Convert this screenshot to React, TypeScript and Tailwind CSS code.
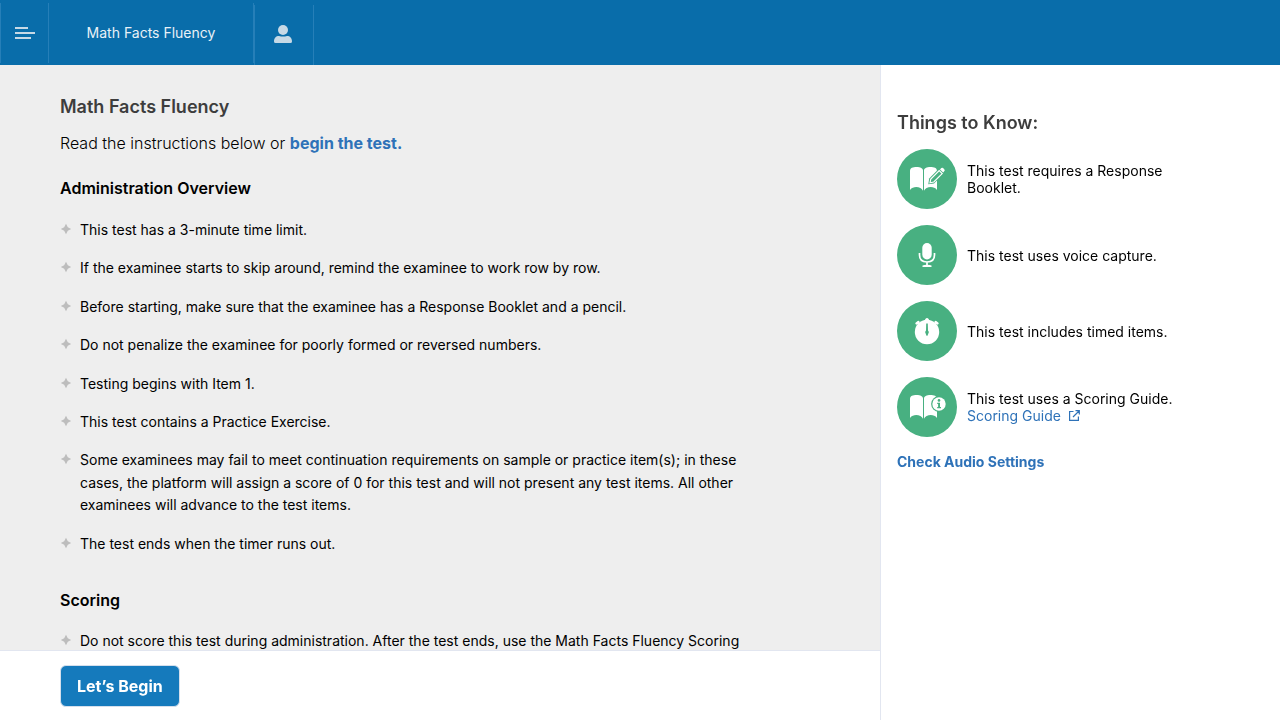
import type { ReactNode } from "react";

const overview = [
  "This test has a 3-minute time limit.",
  "If the examinee starts to skip around, remind the examinee to work row by row.",
  "Before starting, make sure that the examinee has a Response Booklet and a pencil.",
  "Do not penalize the examinee for poorly formed or reversed numbers.",
  "Testing begins with Item 1.",
  "This test contains a Practice Exercise.",
  "Some examinees may fail to meet continuation requirements on sample or practice item(s); in these cases, the platform will assign a score of 0 for this test and will not present any test items. All other examinees will advance to the test items.",
  "The test ends when the timer runs out.",
];

const scoring = [
  "Do not score this test during administration. After the test ends, use the Math Facts Fluency Scoring Guide.",
];

function BulletList({ items }: { items: string[] }) {
  return (
    <ul className="flex flex-col gap-4 text-sm leading-[1.6]">
      {items.map((item) => (
        <li key={item} className="flex gap-2">
          <svg viewBox="0 0 12 12" className="mt-1 size-3 shrink-0 fill-[#bdbdbd]" aria-hidden="true">
            <path d="M6 0.8 L7.8 4.2 L11.2 6 L7.8 7.8 L6 11.2 L4.2 7.8 L0.8 6 L4.2 4.2 Z" />
          </svg>
          <span>{item}</span>
        </li>
      ))}
    </ul>
  );
}

function Badge({ children }: { children: ReactNode }) {
  return (
    <svg viewBox="0 0 60 60" className="size-15 shrink-0" aria-hidden="true">
      <circle cx="30" cy="30" r="30" fill="#48b081" />
      {children}
    </svg>
  );
}

const BOOK =
  "M13 22 C13 18.8 16 18 19.5 18 C23.5 18 26 19.5 26 21.5 V41.8 C24.5 37.8 16.5 36.2 13 41 Z M27 21.5 C27 19.5 29.5 18 33.5 18 C37 18 40 18.8 40 22 V41 C36.5 36.2 28.5 37.8 27 41.8 Z";

function BookletIcon() {
  return (
    <Badge>
      <path d={BOOK} fill="#fff" />
      <path d="M31.3 35.3 L32.2 29.4 L44 17.6 L49 22.6 L37 34.4 Z" fill="#48b081" />
      <path d="M33 33.8 L33.8 30 L42.2 21.6 L45.2 24.6 L36.8 33 Z" fill="#48b081" stroke="#fff" strokeWidth="1.2" />
      <path d="M43 20.4 L44.3 19.1 Q45.2 18.3 46.1 19.1 L47.4 20.5 Q48.2 21.3 47.4 22.1 L46.2 23.5 Z" fill="#fff" />
    </Badge>
  );
}

function MicIcon() {
  return (
    <Badge>
      <rect x="25.3" y="18" width="9.4" height="16.5" rx="4.7" fill="#fff" />
      <path d="M22.5 28 V30 C22.5 34.5 25.5 37 30 37 C34.5 37 37.5 34.5 37.5 30 V28 M30 37 V41" fill="none" stroke="#fff" strokeWidth="1.7" />
      <path d="M25.5 42 V40.4 Q27 39.8 30 39.8 Q33 39.8 34.5 40.4 V42 Z" fill="#fff" />
    </Badge>
  );
}

function TimerIcon() {
  return (
    <Badge>
      <circle cx="30" cy="31" r="12.2" fill="#fff" />
      <path d="M27.5 20 L28.4 18 Q30 16.2 31.6 18 L32.5 20 Z" fill="#fff" />
      <path d="M19.5 22.4 L21.4 21 M40.5 22.4 L38.6 21" stroke="#fff" strokeWidth="2.4" strokeLinecap="round" />
      <path d="M20.8 21.8 L24 25 M39.2 21.8 L36 25" stroke="#fff" strokeWidth="2" />
      <path d="M29.2 22.5 H30.8 L31 29.5 L31.9 31 L30.5 34.8 H29.5 L28.1 31 L29 29.5 Z" fill="#48b081" />
    </Badge>
  );
}

function GuideIcon() {
  return (
    <Badge>
      <path d={BOOK} fill="#fff" />
      <circle cx="42" cy="27" r="7.9" fill="#48b081" />
      <circle cx="42" cy="27" r="6.7" fill="#fff" />
      <circle cx="42" cy="23.4" r="1.3" fill="#48b081" />
      <path d="M40.2 25.8 H43 V30 H44 V31.2 H40.2 V30 H41.1 V27 H40.2 Z" fill="#48b081" />
    </Badge>
  );
}

function Fact({ icon, children }: { icon: ReactNode; children: ReactNode }) {
  return (
    <li className="flex items-center gap-[10px]">
      {icon}
      <div>{children}</div>
    </li>
  );
}

export default function App() {
  return (
    <div className="flex h-screen flex-col bg-white font-['Inter',sans-serif] text-black">
      <header className="flex h-[65px] shrink-0 items-end bg-[#096daa]">
        <nav className="flex items-end text-white" aria-label="Main">
          <button type="button" aria-label="Menu" className="mb-[2px] flex h-15 w-12 items-center border-l border-[#267fb8] pl-[14px]">
            <svg viewBox="0 0 20 12" className="h-3 w-5 fill-[#c6d9e6]" aria-hidden="true">
              <path d="M0 0H13V2H0Z M0 5H20V7H0Z M0 10H16V12H0Z" />
            </svg>
          </button>
          <div className="mb-[2px] flex h-15 w-[206px] items-center justify-center border-x border-[#267fb8] text-sm text-[#e8f1f7]">
            Math Facts Fluency
          </div>
          <button type="button" aria-label="Profile" className="flex h-15 w-15 items-center justify-center border-x border-[#267fb8] pr-[2px] pb-[2px]">
            <svg viewBox="0 0 18 18" className="size-[18px] fill-[#c6d9e6]" aria-hidden="true">
              <circle cx="9" cy="5" r="5" />
              <path d="M0 16.5 C0 13 2 11 5 11 Q9 12.2 13 11 C16 11 18 13 18 16.5 Q18 18 16.5 18 H1.5 Q0 18 0 16.5 Z" />
            </svg>
          </button>
        </nav>
      </header>

      <div className="flex min-h-0 flex-1">
        <div className="flex min-w-0 flex-1 flex-col">
          <main className="min-h-0 flex-1 overflow-y-auto bg-[#eeeeee] pt-7 pr-[120px] pl-15 [scrollbar-width:none]">
            <h1 className="text-lg font-semibold text-[#3d3d3d]">Math Facts Fluency</h1>
            <p className="mt-[10px] text-base font-light">
              Read the instructions below or{" "}
              <a href="#begin" className="font-bold text-[#2e72b8]">
                begin the test.
              </a>
            </p>
            <h2 className="mt-[21px] mb-[19px] text-base font-semibold">Administration Overview</h2>
            <BulletList items={overview} />
            <h2 className="mt-[33px] mb-[18px] text-base font-semibold">Scoring</h2>
            <BulletList items={scoring} />
          </main>
          <footer className="flex h-[70px] shrink-0 items-center border-t border-[#e2e6f0] pl-15">
            <button type="button" className="h-[42px] rounded-md border border-[#d5dfec] bg-[#157abc] px-4 text-base font-bold text-white">
              Let’s Begin
            </button>
          </footer>
        </div>

        <aside className="w-[400px] shrink-0 border-l border-[#e2e6f0] px-4 pt-11">
          <h2 className="text-lg font-semibold text-[#3d3d3d]">Things to Know:</h2>
          <ul className="mt-3 flex max-w-[300px] flex-col gap-4 text-sm leading-[17px]">
            <Fact icon={<BookletIcon />}>This test requires a Response Booklet.</Fact>
            <Fact icon={<MicIcon />}>This test uses voice capture.</Fact>
            <Fact icon={<TimerIcon />}>This test includes timed items.</Fact>
            <Fact icon={<GuideIcon />}>
              This test uses a Scoring Guide.
              <br />
              <a href="#scoring-guide" className="inline-flex items-center gap-2 text-[#2e72b8]">
                Scoring Guide
                <svg viewBox="0 0 11 11" className="size-[11px]" fill="none" stroke="#2e72b8" strokeWidth="1.2" aria-hidden="true">
                  <path d="M4.5 1.5H0.6V10.4H9.4V6.5 M4 7L10 1 M6.5 0.7H10.3V4.5" />
                </svg>
              </a>
            </Fact>
          </ul>
          <a href="#audio" className="mt-[15px] inline-block text-sm font-bold text-[#2e72b8]">
            Check Audio Settings
          </a>
        </aside>
      </div>
    </div>
  );
}
